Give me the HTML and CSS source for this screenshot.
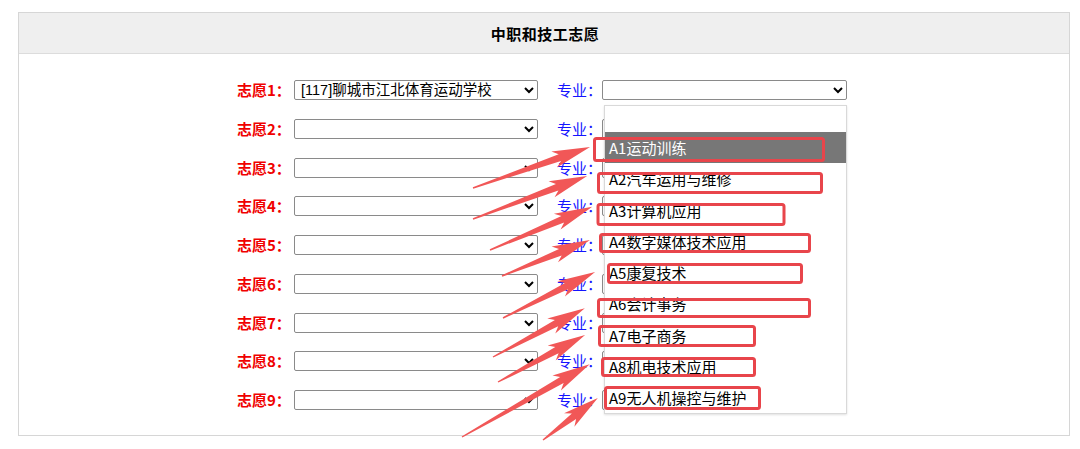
FILE: index.html
```html
<!DOCTYPE html>
<html lang="zh-CN">
<head>
<meta charset="utf-8">
<title>中职和技工志愿</title>
<link rel="stylesheet" href="styles.css">
</head>
<body>
<div class="panel">
  <div class="panel-head">中职和技工志愿</div>
  <div class="panel-body">
    <div class="row">
      <span class="lbl">志愿1：</span>
      <select class="sel-school"><option>[117]聊城市江北体育运动学校</option></select>
      <span class="lbl-major">专业：</span>
      <div class="major-wrap">
        <select class="sel-major"><option></option></select>
        <div class="droplist">
          <div class="opt opt-empty"></div>
          <div class="opt opt-active">A1运动训练</div>
          <div class="opt">A2汽车运用与维修</div>
          <div class="opt">A3计算机应用</div>
          <div class="opt">A4数字媒体技术应用</div>
          <div class="opt">A5康复技术</div>
          <div class="opt">A6会计事务</div>
          <div class="opt">A7电子商务</div>
          <div class="opt">A8机电技术应用</div>
          <div class="opt">A9无人机操控与维护</div>
        </div>
      </div>
    </div>
    <div class="row">
      <span class="lbl">志愿2：</span>
      <select class="sel-school"><option></option></select>
      <span class="lbl-major">专业：</span>
      <div class="major-wrap"><select class="sel-major"><option></option></select></div>
    </div>
    <div class="row">
      <span class="lbl">志愿3：</span>
      <select class="sel-school"><option></option></select>
      <span class="lbl-major">专业：</span>
      <div class="major-wrap"><select class="sel-major"><option></option></select></div>
    </div>
    <div class="row">
      <span class="lbl">志愿4：</span>
      <select class="sel-school"><option></option></select>
      <span class="lbl-major">专业：</span>
      <div class="major-wrap"><select class="sel-major"><option></option></select></div>
    </div>
    <div class="row">
      <span class="lbl">志愿5：</span>
      <select class="sel-school"><option></option></select>
      <span class="lbl-major">专业：</span>
      <div class="major-wrap"><select class="sel-major"><option></option></select></div>
    </div>
    <div class="row">
      <span class="lbl">志愿6：</span>
      <select class="sel-school"><option></option></select>
      <span class="lbl-major">专业：</span>
      <div class="major-wrap"><select class="sel-major"><option></option></select></div>
    </div>
    <div class="row">
      <span class="lbl">志愿7：</span>
      <select class="sel-school"><option></option></select>
      <span class="lbl-major">专业：</span>
      <div class="major-wrap"><select class="sel-major"><option></option></select></div>
    </div>
    <div class="row">
      <span class="lbl">志愿8：</span>
      <select class="sel-school"><option></option></select>
      <span class="lbl-major">专业：</span>
      <div class="major-wrap"><select class="sel-major"><option></option></select></div>
    </div>
    <div class="row">
      <span class="lbl">志愿9：</span>
      <select class="sel-school"><option></option></select>
      <span class="lbl-major">专业：</span>
      <div class="major-wrap"><select class="sel-major"><option></option></select></div>
    </div>
  </div>
</div>

<svg class="annot" width="1080" height="449" viewBox="0 0 1080 449" xmlns="http://www.w3.org/2000/svg">
  <g class="boxes" fill="none" stroke="#e8454b" stroke-width="3">
    <rect x="594.5" y="138.5" width="229" height="22" rx="2"/>
    <rect x="598.5" y="173.5" width="223" height="19" rx="2"/>
    <rect x="598" y="204.5" width="186" height="20" rx="2"/>
    <rect x="600.5" y="234.5" width="209" height="17" rx="2"/>
    <rect x="608.5" y="264.5" width="193" height="18" rx="2"/>
    <rect x="598.5" y="299.5" width="211" height="17" rx="2"/>
    <rect x="599.5" y="326.5" width="155" height="19" rx="2"/>
    <rect x="602.5" y="358.5" width="152" height="17" rx="2"/>
    <rect x="605.5" y="387.5" width="154" height="21" rx="2"/>
  </g>
  <g class="arrows" fill="#f15757">
    <path transform="translate(473 188) rotate(-19.3)" d="M0,-0.7 L92,-3.5 L86,-8.5 L124,0 L86,8.5 L92,3.5 L0,0.7 Z"/>
    <path transform="translate(473 219) rotate(-20.7)" d="M0,-0.7 L90,-3.5 L84,-8.5 L122,0 L84,8.5 L90,3.5 L0,0.7 Z"/>
    <path transform="translate(490 250) rotate(-22.9)" d="M0,-0.7 L79,-3.5 L73,-8.5 L111,0 L73,8.5 L79,3.5 L0,0.7 Z"/>
    <path transform="translate(502 276) rotate(-22.2)" d="M0,-0.7 L63,-3.5 L57,-8.5 L95,0 L57,8.5 L63,3.5 L0,0.7 Z"/>
    <path transform="translate(503 318) rotate(-26.6)" d="M0,-0.7 L71,-3.5 L65,-8.5 L103,0 L65,8.5 L71,3.5 L0,0.7 Z"/>
    <path transform="translate(493 357) rotate(-28)" d="M0,-0.7 L72,-3.5 L66,-8.5 L104,0 L66,8.5 L72,3.5 L0,0.7 Z"/>
    <path transform="translate(498 382) rotate(-28.4)" d="M0,-0.7 L67,-3.5 L61,-8.5 L99,0 L61,8.5 L67,3.5 L0,0.7 Z"/>
    <path transform="translate(462 437) rotate(-29.7)" d="M0,-0.7 L115,-3.5 L109,-8.5 L147,0 L109,8.5 L115,3.5 L0,0.7 Z"/>
    <path transform="translate(543 440) rotate(-37.4)" d="M0,-0.7 L39,-3.5 L33,-8.5 L69,0 L33,8.5 L39,3.5 L0,0.7 Z"/>
  </g>
</svg>
</body>
</html>
```

FILE: styles.css
```css
html, body {
  margin: 0;
  padding: 0;
  background: #ffffff;
}

body {
  width: 1080px;
  height: 449px;
  overflow: hidden;
  position: relative;
  font-family: "Noto Sans CJK SC", "Noto Sans", sans-serif;
  color: #000;
}

.panel {
  margin: 12px 10px 0 18px;
  border: 1px solid #d6d6d6;
  box-sizing: border-box;
  height: 424px;
  display: flex;
  flex-direction: column;
}

.panel-head {
  height: 40px;
  background: #efefef;
  border-bottom: 1px solid #dcdcdc;
  display: flex;
  align-items: center;
  justify-content: center;
  font-size: 15px;
  font-weight: bold;
  letter-spacing: 0.5px;
  padding-left: 2px;
}

.panel-body {
  padding: 26px 0 0 218px;
  display: flex;
  flex-direction: column;
  gap: 18.75px;
}

.row {
  display: flex;
  align-items: center;
  height: 20px;
}

.lbl {
  width: 57px;
  flex: none;
  color: #f00000;
  font-weight: bold;
  font-size: 15px;
  line-height: 20px;
}

.lbl-major {
  width: 45px;
  flex: none;
  margin-left: 19px;
  color: #1414ff;
  font-size: 15px;
  line-height: 20px;
}

.sel-school,
.sel-major {
  display: block;
  flex: none;
  height: 20px;
  box-sizing: border-box;
  font-family: "Liberation Sans", "Noto Sans CJK SC", sans-serif;
  font-size: 14.5px;
  line-height: 16px;
  padding: 0 0 0 2px;
  margin: 0;
  color: #000;
  background-color: #fff;
  border: 1px solid #8a8a8a;
  border-radius: 2px;
}

.sel-school {
  width: 244px;
}

.major-wrap {
  position: relative;
  flex: none;
  width: 245px;
  height: 20px;
}

.sel-major {
  width: 245px;
}

.droplist {
  position: absolute;
  top: 25px;
  left: 2px;
  width: 243px;
  height: 309px;
  box-sizing: border-box;
  background: #fff;
  border: 1px solid #d9d9d9;
  box-shadow: 0 1px 2px rgba(0, 0, 0, 0.12);
  z-index: 2;
}

.opt {
  height: 31.25px;
  display: flex;
  align-items: center;
  padding-left: 4px;
  font-size: 15px;
  color: #000;
  white-space: nowrap;
}

.opt-empty {
  height: 26px;
}

.opt-active {
  background: #777777;
  color: #ffffff;
}

.annot {
  position: absolute;
  top: 0;
  left: 0;
  pointer-events: none;
  z-index: 5;
}
```
